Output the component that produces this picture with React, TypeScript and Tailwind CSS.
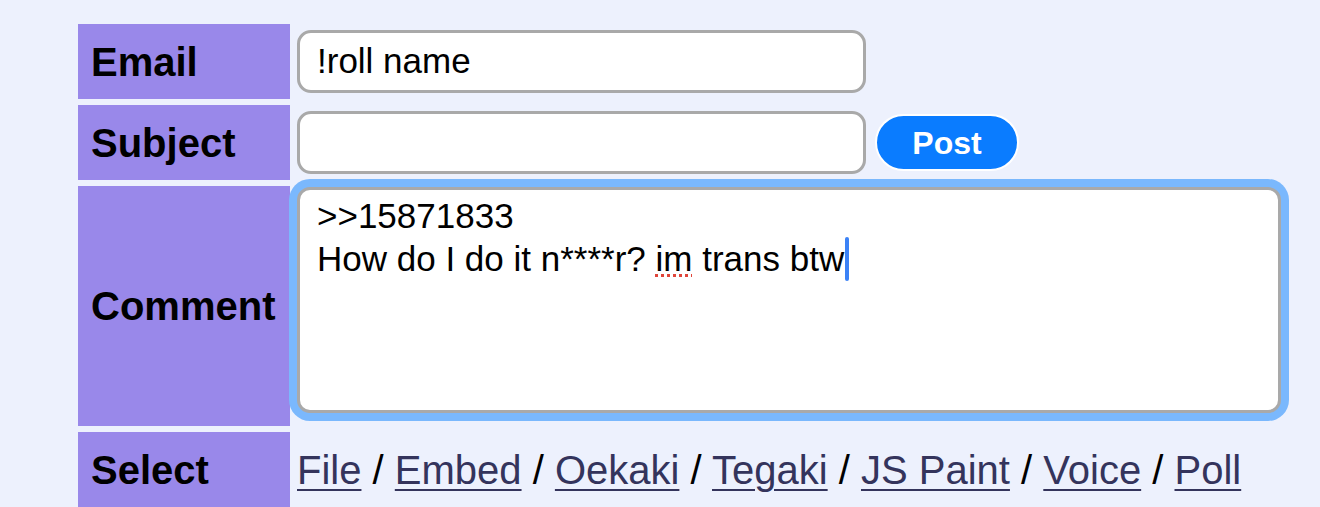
export default function App() {
  const links = ["File", "Embed", "Oekaki", "Tegaki", "JS Paint", "Voice", "Poll"];
  const label =
    "flex items-center bg-[#9988ea] pl-[13px] text-[40px] font-bold text-black";
  const field =
    "h-[63px] w-[569px] rounded-[14px] border-[3px] border-[#a9a9a9] bg-white pl-[17px] text-[35px] leading-[55px] text-black";

  return (
    <div className="min-h-[507px] bg-[#edf1fd] pl-[78px] pt-[24px] font-['Liberation_Sans',Arial,sans-serif]">
      <div className="grid grid-cols-[212px_1fr] gap-x-[7px] gap-y-[6px] grid-rows-[75px_75px_240px_75px]">
        <div className={label}>Email</div>
        <div className="flex items-center">
          <div className={field}>!roll name</div>
        </div>

        <div className={label}>Subject</div>
        <div className="flex items-center gap-[9px]">
          <div className={field}></div>
          <button className="h-[57px] w-[144px] rounded-full border-2 border-white bg-[#0a7cff] text-[32px] font-bold text-white">
            Post
          </button>
        </div>

        <div className={label}>Comment</div>
        <div className="pt-px">
          <div className="h-[226px] w-[984px] rounded-[13px] border-[3px] border-[#a9a9a9] bg-white pl-[17px] pt-[5px] text-[35px] leading-[42px] text-black shadow-[0_0_0_8px_#7ab8fd]">
            <div>&gt;&gt;15871833</div>
            <div className="flex items-center">
              <span>
                How do I do it n****r?{" "}
                <span className="underline decoration-dotted decoration-[#e0453a] decoration-[3px] underline-offset-[3px]">
                  im
                </span>{" "}
                trans btw
              </span>
              <span className="ml-px h-[44px] w-[4px] rounded-sm bg-[#3b82f6]"></span>
            </div>
          </div>
        </div>

        <div className={label}>Select</div>
        <div className="flex items-center text-[40px] text-black">
          {links.map((l, i) => (
            <span key={l} className="whitespace-pre">
              {i > 0 && " / "}
              <a href="#" className="text-[#34345c] underline decoration-2 underline-offset-[5px]">
                {l}
              </a>
            </span>
          ))}
        </div>
      </div>
    </div>
  );
}
